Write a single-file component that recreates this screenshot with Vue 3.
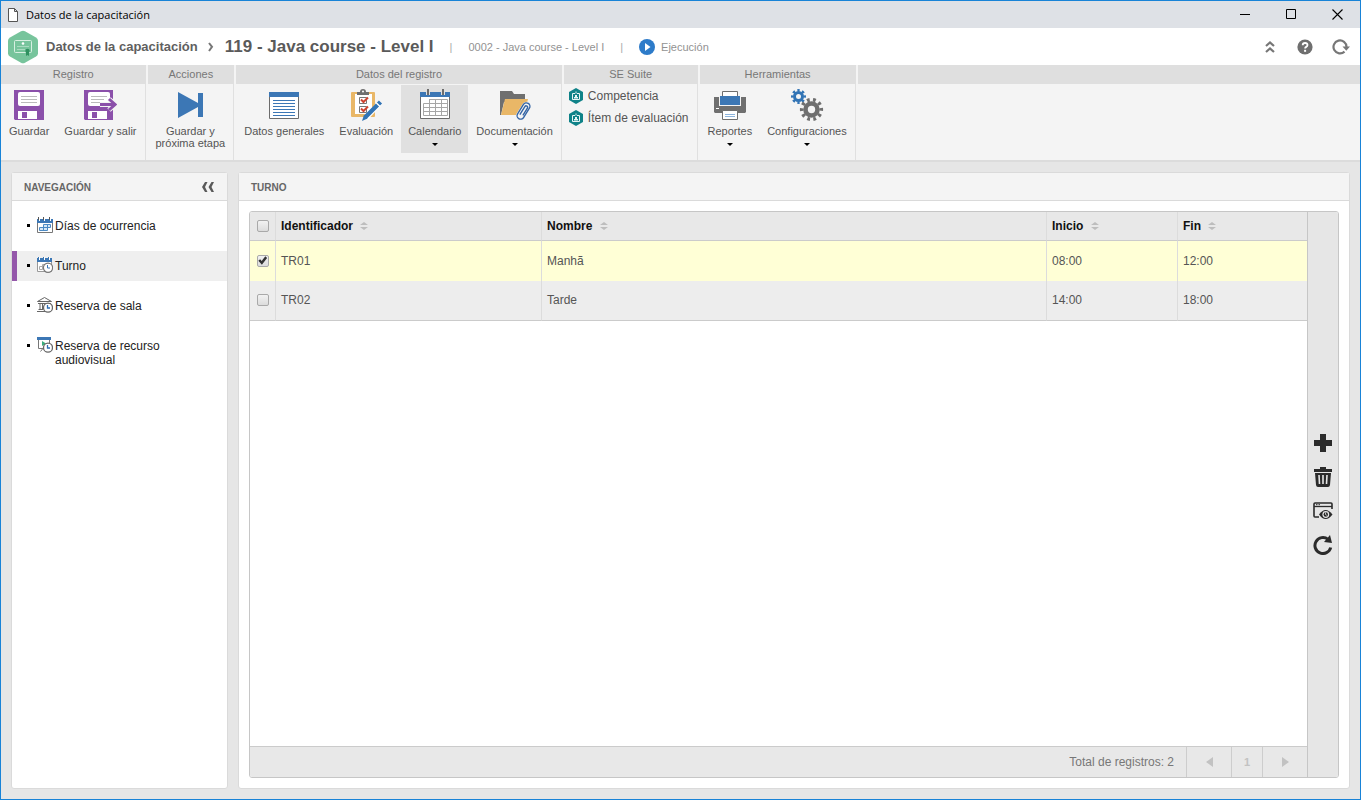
<template>
  <div class="window">
    <!-- title bar -->
    <div class="titlebar">
      <svg class="doc-icon" width="10" height="14" viewBox="0 0 10 14">
        <path d="M.5 .5h6l3 3v10h-9z M6.5 .5v3h3" fill="#fff" stroke="#555" />
      </svg>
      <span class="titlebar-text">Datos de la capacitación</span>
      <div class="window-controls">
        <button aria-label="Minimizar">
          <svg width="11" height="11" viewBox="0 0 11 11"><path d="M0 5.5h10" stroke="#000" /></svg>
        </button>
        <button aria-label="Maximizar">
          <svg width="11" height="11" viewBox="0 0 11 11"><path d="M.5 .5h9v9h-9z" fill="none" stroke="#000" /></svg>
        </button>
        <button aria-label="Cerrar">
          <svg width="11" height="11" viewBox="0 0 11 11"><path d="M.5 .5l10 10M10.5 .5l-10 10" stroke="#000" stroke-width="1.1" /></svg>
        </button>
      </div>
    </div>

    <!-- header -->
    <header class="header">
      <svg class="logo" width="30" height="34" viewBox="0 0 30 34">
        <path d="M13 1.2q2-1.1 4 0l11 6.2q2 1.2 2 3.4v12.4q0 2.2-2 3.4l-11 6.2q-2 1.1-4 0l-11-6.2q-2-1.2-2-3.4V10.8q0-2.2 2-3.4z" fill="#77c49c" />
        <rect x="6.5" y="10.5" width="17" height="12" rx="1" fill="none" stroke="#d8f0e2" />
        <circle cx="15" cy="13.500" r="1.300" fill="#fff" />
        <path d="M9 16.500h12M9 19.500h8" stroke="#a9dbc0" />
        <circle cx="19.500" cy="21" r="2.200" fill="#2f9160" />
        <path d="M18 22v4l1.500-1 1.500 1v-4z" fill="#2f9160" />
      </svg>
      <span class="crumb">Datos de la capacitación</span>
      <svg class="crumb-arrow" width="6" height="10" viewBox="0 0 6 10"><path d="M1 1l3 3.800L1 9" fill="none" stroke="#777" stroke-width="2" /></svg>
      <h1 class="course">119 - Java course - Level I</h1>
      <span class="bar">|</span>
      <span class="sub">0002 - Java course - Level I</span>
      <span class="bar">|</span>
      <svg class="play" width="16" height="16" viewBox="0 0 16 16">
        <circle cx="8" cy="8" r="8" fill="#2d7bc9" />
        <path d="M6 4l5.500 4L6 12z" fill="#fff" />
      </svg>
      <span class="sub">Ejecución</span>
      <div class="header-actions">
        <button aria-label="Contraer">
          <svg width="16" height="16" viewBox="0 0 16 16"><path d="M4 7l4-3.500L12 7M4 13l4-3.500 4 3.500" fill="none" stroke="#777" stroke-width="2.200" /></svg>
        </button>
        <button aria-label="Ayuda">
          <svg width="16" height="16" viewBox="0 0 16 16">
            <circle cx="8" cy="8" r="7.600" fill="#6f6f6f" />
            <path d="M5.700 6.300q0-2.300 2.400-2.300t2.400 2q0 1.100-1.300 1.900-1.100.6-1.100 1.700" fill="none" stroke="#fff" stroke-width="1.800" />
            <rect x="7.100" y="10.800" width="2" height="2" fill="#fff" />
          </svg>
        </button>
        <button aria-label="Actualizar">
          <svg width="18" height="16" viewBox="0 0 18 16">
            <path d="M12.500 12.600A6.500 6.500 0 1 1 14.500 8" fill="none" stroke="#777" stroke-width="2.200" />
            <path d="M10.500 7.500h7.500l-3.700 4.300z" fill="#777" />
          </svg>
        </button>
      </div>
    </header>

    <!-- ribbon -->
    <div class="ribbon">
      <section class="group">
        <h2>Registro</h2>
        <div class="group-body">
          <button class="tool">
            <svg viewBox="0 0 34 34">
              <path d="M2 2h30v30H3l-1-1z" fill="#8b50aa" />
              <rect x="6" y="4" width="22" height="14" rx="2" fill="#fff" />
              <path d="M9 8.500h16M9 11.500h16M9 14.500h16" stroke="#bbb" />
              <path d="M6 23h19v8H6z" fill="#fff" />
              <path d="M10 24h5v6h-5z" fill="#8b50aa" />
            </svg>
            <span>Guardar</span>
          </button>
          <button class="tool">
            <svg viewBox="0 0 34 34">
              <path d="M1 2h29v30H2l-1-1z" fill="#8b50aa" />
              <rect x="5" y="4" width="22" height="14" rx="2" fill="#fff" />
              <path d="M8 8.500h16M8 11.500h13M8 14.500h9" stroke="#bbb" />
              <path d="M5 23h19v8H5z" fill="#fff" />
              <path d="M9 24h5v6H9z" fill="#8b50aa" />
              <path d="M17 16.500h14M26 11l6 5.500-6 5.500" fill="none" stroke="#f4f4f4" stroke-width="5" />
              <path d="M17 16.500h14M26 11l6 5.500-6 5.500" fill="none" stroke="#8b50aa" stroke-width="3" />
            </svg>
            <span>Guardar y salir</span>
          </button>
        </div>
      </section>

      <section class="group">
        <h2>Acciones</h2>
        <div class="group-body">
          <button class="tool">
            <svg viewBox="0 0 34 34">
              <path d="M5 4l20 11V5h5v24h-5V19L5 30z" fill="#3c77b5" />
            </svg>
            <span>Guardar y<br />próxima etapa</span>
          </button>
        </div>
      </section>

      <section class="group">
        <h2>Datos del registro</h2>
        <div class="group-body">
          <button class="tool">
            <svg viewBox="0 0 34 34">
              <path d="M2.500 4.500h29v26h-29z" fill="#fff" stroke="#6c6c6c" />
              <path d="M2 4h30v5H2z" fill="#3c77b5" />
              <path d="M6 12.500h22M6 15.500h22M6 18.500h22M6 21.500h22M6 24.500h22M6 27.500h22" stroke="#3c77b5" />
            </svg>
            <span>Datos generales</span>
          </button>
          <button class="tool">
            <svg viewBox="0 0 34 34">
              <rect x="2" y="4" width="24" height="25" rx="1" fill="#e9b767" />
              <path d="M6 6h17v16l-4 4H6z" fill="#fff" />
              <path d="M8 7V4h3q0-3 3-3t3 3h3v3z" fill="#6f6f6f" />
              <circle cx="14" cy="3.500" r="1" fill="#fff" />
              <path d="M10.500 9.500h7v6h-7zM10.500 18.500h7v6h-7z" fill="#fff" stroke="#777" />
              <path d="M12 11.500l2.500 2.500 4.500-4.500M12 20.500l2.500 2.500 4.500-4.500" fill="none" stroke="#d0432f" stroke-width="2" />
              <path d="M17 30L31 15" stroke="#fff" stroke-width="5" />
              <path d="M13 33l2-6 3.500 3.500z" fill="#3274b5" />
              <path d="M16 29.500L28.500 17M29.500 16l2-2" stroke="#3274b5" stroke-width="4.400" />
            </svg>
            <span>Evaluación</span>
          </button>
          <button class="tool tool-active">
            <svg viewBox="0 0 34 34">
              <path d="M2.500 4.500h29v26h-29z" fill="#fff" stroke="#6c6c6c" />
              <path d="M2 4h30v5H2z" fill="#3c77b5" />
              <path d="M8 3h4v4H8zM23 3h4v4h-4z" fill="#e0e0e0" />
              <path d="M9 1h2v6H9zM24 1h2v6h-2z" fill="#6c6c6c" />
              <path d="M11 11.500h18.500v16h-24v-12h24M5.500 19.500h24M5.500 23.500h24M11.500 11v16.500M17.500 11v16.500M23.500 11v16.500" fill="none" stroke="#a6a6a6" />
            </svg>
            <span>Calendario</span>
            <i class="caret"></i>
          </button>
          <button class="tool">
            <svg viewBox="0 0 34 34">
              <path d="M2 3h12l2 3h11v8H6L3 27H2z" fill="#6f6f6f" />
              <path d="M7 11h23l-4 16H3z" fill="#e9b767" />
              <g fill="none" stroke-width="1.400" transform="rotate(32 25.500 23)">
                <rect x="21" y="13" width="9" height="20" rx="4.500" fill="#f4f4f4" />
                <rect x="22" y="14" width="7" height="18" rx="3.500" stroke="#3565a5" />
                <path d="M24.300 28v-9.500a1.500 1.500 0 0 1 3 0V27" stroke="#3565a5" />
              </g>
            </svg>
            <span>Documentación</span>
            <i class="caret"></i>
          </button>
        </div>
      </section>

      <section class="group">
        <h2>SE Suite</h2>
        <div class="group-body group-links">
          <button v-for="item in suiteItems" :key="item" class="suite">
            <svg width="14" height="16" viewBox="0 0 14 16">
              <path d="M7 0l7 4v8l-7 4-7-4V4z" fill="#0f8288" />
              <path d="M6 5.500H3.500v6h7v-6H8" fill="none" stroke="#e6f4f4" />
              <path d="M6.500 3.500h1v2h-1z" fill="#e6f4f4" />
              <path d="M5 10.500h4V9H8V7H6v2H5z" fill="#e6f4f4" />
            </svg>
            <span>{{ item }}</span>
          </button>
        </div>
      </section>

      <section class="group">
        <h2>Herramientas</h2>
        <div class="group-body">
          <button class="tool">
            <svg viewBox="0 0 34 34">
              <path d="M9.500 3.500h15v8h-15z" fill="#fff" stroke="#6f6f6f" />
              <path d="M1 9h32v15l-1 1H2l-1-1z" fill="#6f6f6f" />
              <path d="M6 8h22v10H6z" fill="#f4f4f4" />
              <path d="M7 8h20v9H7z" fill="#3c77b5" />
              <path d="M3 20.500h3" stroke="#fff" />
              <path d="M9.500 22.500h15v9h-15z" fill="#fff" stroke="#6f6f6f" />
              <path d="M12 26.500h10M12 28.500h10" stroke="#8db4dc" />
            </svg>
            <span>Reportes</span>
            <i class="caret"></i>
          </button>
          <button class="tool">
            <svg viewBox="0 0 34 34">
              <g fill="none" stroke="#3274b5">
                <circle cx="8.500" cy="8.500" r="4" stroke-width="3" />
                <circle cx="8.500" cy="8.500" r="6.200" stroke-width="2.600" pathLength="16" stroke-dasharray="1 1" stroke-dashoffset=".5" />
              </g>
              <g fill="none" stroke="#6f6f6f">
                <circle cx="21.500" cy="21.500" r="6" stroke-width="4.600" />
                <circle cx="21.500" cy="21.500" r="9.800" stroke-width="3.600" pathLength="20" stroke-dasharray=".9 1.100" stroke-dashoffset=".5" />
              </g>
            </svg>
            <span>Configuraciones</span>
            <i class="caret"></i>
          </button>
        </div>
      </section>

      <div class="ribbon-rest"></div>
    </div>

    <!-- content -->
    <main class="content">
      <nav class="panel nav">
        <div class="panel-head">
          <h3>NAVEGACIÓN</h3>
          <button aria-label="Ocultar navegación">
            <svg width="14" height="12" viewBox="0 0 14 12"><path d="M6.500 1H4L1 6l3 5h2.500L4 6zM13 1h-2.500l-3 5 3 5H13l-2.500-5z" fill="#5a5a5a" /></svg>
          </button>
        </div>
        <ul>
          <li v-for="item in navItems" :key="item.icon">
            <a href="#" :class="{ active: item.icon === current }" @click.prevent="current = item.icon">
              <i class="bullet"></i>
              <svg v-if="item.icon === 'days'" width="16" height="16" viewBox="0 0 16 16">
                <path d="M.5 3.500h15v12H.5z" fill="#fff" stroke="#777" />
                <path d="M0 2h16v4H0z" fill="#3c77b5" />
                <path d="M2.500 0v4M7.500 0v4M13.500 0v4" stroke="#fff" />
                <path d="M1.500 0v3M6.500 0v3M12.500 0v3" stroke="#555" />
                <path d="M6.500 7.500h7v3h-7zM2.500 10.500h8v3h-8zM10.500 7.500v3M6.500 10.500v3" fill="#d7e8f7" stroke="#4c8ac4" />
              </svg>
              <svg v-else-if="item.icon === 'shift'" width="16" height="16" viewBox="0 0 16 16">
                <path d="M.5 3.500h14v11H.5z" fill="#fff" stroke="#999" />
                <path d="M0 1h15v4H0z" fill="#3c77b5" />
                <path d="M2.500 0v3M7.500 0v3M12.500 0v3" stroke="#fff" />
                <path d="M1.500 0v3M6.500 0v3M11.500 0v3" stroke="#3c77b5" />
                <path d="M2.500 9.500h3v3h-3zM5.500 7.500h3v3h-3z" fill="none" stroke="#aaa" />
                <circle cx="11" cy="10.700" r="4.600" fill="#fff" stroke="#777" stroke-width="1.200" />
                <path d="M10.500 8v3H13" fill="none" stroke="#3c77b5" />
              </svg>
              <svg v-else-if="item.icon === 'room'" width="16" height="16" viewBox="0 0 16 16">
                <path d="M.5 4.500L7.500 .5l7 4zM1 6.500h13M0 14.500h8M3 7v5M5.500 7v5M1.500 12.500H6" fill="none" stroke="#666" />
                <circle cx="11" cy="10.700" r="4.500" fill="#fff" stroke="#666" stroke-width="1.300" />
                <path d="M10.500 8v3H13" fill="none" stroke="#2f6db3" stroke-width="1.300" />
              </svg>
              <svg v-else width="16" height="16" viewBox="0 0 16 16">
                <path d="M1.500 2v9.500H7M12.500 2v4M5.500 12L3.500 14.500" fill="none" stroke="#777" />
                <path d="M0 0h14v3H0z" fill="#3c77b5" />
                <path d="M5 4l4 2.500L5 9z" fill="#37ad7c" />
                <circle cx="11" cy="10.700" r="4.500" fill="#fff" stroke="#666" stroke-width="1.300" />
                <path d="M10.500 8v3H13" fill="none" stroke="#2f6db3" stroke-width="1.300" />
              </svg>
              <span>{{ item.label }}</span>
            </a>
          </li>
        </ul>
      </nav>

      <section class="panel main">
        <div class="panel-head">
          <h3>TURNO</h3>
        </div>
        <div class="grid">
          <div class="grid-main">
            <table>
              <thead>
                <tr>
                  <th class="col-check">
                    <input type="checkbox" v-model="allSelected" aria-label="Seleccionar todos" />
                  </th>
                  <th v-for="col in columns" :key="col.key" :class="'col-' + col.key">
                    {{ col.label }}
                    <svg class="sort" width="8" height="8" viewBox="0 0 8 8"><path d="M4 0l4 3H0zM0 5h8L4 8z" fill="#bdbdbd" /></svg>
                  </th>
                </tr>
              </thead>
              <tbody>
                <tr v-for="row in rows" :key="row.id" :class="{ selected: row.checked }">
                  <td class="col-check">
                    <input type="checkbox" v-model="row.checked" :aria-label="row.id" />
                  </td>
                  <td>{{ row.id }}</td>
                  <td>{{ row.name }}</td>
                  <td>{{ row.start }}</td>
                  <td>{{ row.end }}</td>
                </tr>
              </tbody>
            </table>
            <div class="grid-footer">
              <span class="total">Total de registros: {{ rows.length }}</span>
              <button class="page-prev" aria-label="Página anterior">
                <svg width="7" height="10" viewBox="0 0 7 10"><path d="M7 0v10L0 5z" fill="#c2c2c2" /></svg>
              </button>
              <button class="page-number">1</button>
              <button class="page-next" aria-label="Página siguiente">
                <svg width="7" height="10" viewBox="0 0 7 10"><path d="M0 0v10l7-5z" fill="#c2c2c2" /></svg>
              </button>
            </div>
          </div>
          <div class="grid-tools">
            <button aria-label="Agregar">
              <svg width="20" height="20" viewBox="0 0 20 20"><path d="M7 1h6v6h6v6h-6v6H7v-6H1V7h6z" fill="#2b2b2b" /></svg>
            </button>
            <button aria-label="Eliminar">
              <svg width="20" height="20" viewBox="0 0 20 20">
                <path d="M7 0h6v2h6v3H1V2h6zM2 6h16l-1 12q-.3 2-2 2H5q-1.700 0-2-2z" fill="#2b2b2b" />
                <path d="M6 8l.5 9M10 8v9M14 8l-.5 9" stroke="#e6e6e6" stroke-width="1.600" />
              </svg>
            </button>
            <button aria-label="Visualizar">
              <svg width="20" height="20" viewBox="0 0 20 20">
                <path d="M6 16H2q-1 0-1-1V3q0-1 1-1h16q1 0 1 1v5" fill="none" stroke="#2b2b2b" stroke-width="1.600" />
                <path d="M1 5.500h18" stroke="#2b2b2b" stroke-width="1.300" />
                <path d="M3 3.700h1.500M5.500 3.700H7" stroke="#2b2b2b" />
                <path d="M6 13.500q6.500-9 13.500 0-7 9-13.500 0z" fill="#2b2b2b" />
                <circle cx="12.800" cy="13.500" r="3.400" fill="#e6e6e6" />
                <circle cx="12.800" cy="13.500" r="2.200" fill="#2b2b2b" />
                <path d="M12.500 11.500v2l1.300.8" fill="none" stroke="#e6e6e6" stroke-width=".8" />
              </svg>
            </button>
            <button aria-label="Actualizar lista">
              <svg width="20" height="20" viewBox="0 0 20 20">
                <path d="M17.700 12.500A8 8 0 1 1 15 4.300" fill="none" stroke="#2b2b2b" stroke-width="3" />
                <path d="M17 0l2 8-8-1z" fill="#2b2b2b" />
              </svg>
            </button>
          </div>
        </div>
      </section>
    </main>
  </div>
</template>

<script setup>
import { ref, computed } from "vue";

const current = ref("shift");

const suiteItems = ["Competencia", "Ítem de evaluación"];

const navItems = [
  { icon: "days", label: "Días de ocurrencia" },
  { icon: "shift", label: "Turno" },
  { icon: "room", label: "Reserva de sala" },
  { icon: "media", label: "Reserva de recurso audiovisual" },
];

const columns = [
  { key: "id", label: "Identificador" },
  { key: "name", label: "Nombre" },
  { key: "start", label: "Inicio" },
  { key: "end", label: "Fin" },
];

const rows = ref([
  { id: "TR01", name: "Manhã", start: "08:00", end: "12:00", checked: true },
  { id: "TR02", name: "Tarde", start: "14:00", end: "18:00", checked: false },
]);

// select / clear every row
const allSelected = computed({
  get: () => rows.value.every((row) => row.checked),
  set: (value) => rows.value.forEach((row) => (row.checked = value)),
});
</script>

<style>
body {
  margin: 0;
}
</style>

<style scoped>
.window {
  display: flex;
  flex-direction: column;
  min-height: 100vh;
  box-sizing: border-box;
  border: 1px solid #1883d7;
  background: #e6e6e6;
  font-family: "Liberation Sans", Arial, sans-serif;
  font-size: 12px;
  color: #555;
}

button {
  padding: 0;
  border: 0;
  background: none;
  font: inherit;
  color: inherit;
}

svg {
  display: block;
  flex: none;
}

h1,
h2,
h3 {
  margin: 0;
}

/* title bar */
.titlebar {
  display: flex;
  align-items: center;
  height: 27px;
  padding-left: 7px;
  background: #dee1e6;
}

.titlebar-text {
  margin-left: 8px;
  font-family: "Open Sans", "Noto Sans", sans-serif;
  font-size: 11px;
  color: #000;
}

.window-controls {
  display: flex;
  margin-left: auto;
}

.window-controls button {
  display: flex;
  align-items: center;
  justify-content: center;
  width: 46px;
  height: 27px;
}

/* header */
.header {
  display: flex;
  align-items: center;
  height: 37px;
  padding: 0 10px 0 7px;
  background: #fff;
  white-space: nowrap;
}

.crumb {
  margin-left: 8px;
  font-size: 13px;
  font-weight: bold;
  color: #5f5f5f;
}

.crumb-arrow {
  margin: 0 11px 0 10px;
}

.course {
  font-size: 17px;
  color: #5a5a5a;
}

.bar {
  margin: 0 16px;
  font-size: 11px;
  color: #aaa;
}

.sub {
  font-size: 11px;
  color: #929292;
}

.play {
  margin-right: 6px;
}

.header-actions {
  display: flex;
  gap: 19px;
  margin-left: auto;
}

/* ribbon */
.ribbon {
  display: flex;
  gap: 2px;
  height: 95px;
  border-bottom: 2px solid #dcdcdc;
  background: #f4f4f4;
}

.group {
  display: flex;
  flex-direction: column;
}

.group h2,
.ribbon-rest::before {
  height: 19px;
  background: #dfdfdf;
  font-size: 11px;
  font-weight: normal;
  line-height: 19px;
  text-align: center;
  color: #777;
}

.group-body {
  display: flex;
  flex: 1;
  align-items: flex-start;
  gap: 1px;
  padding: 1px 1px 0;
  border-right: 1px solid #e0e0e0;
}

.ribbon-rest {
  flex: 1;
}

.ribbon-rest::before {
  content: "";
  display: block;
}

.tool {
  display: flex;
  flex-direction: column;
  align-items: center;
  height: 68px;
  padding: 3px 7px 0;
  font-size: 11px;
  line-height: 12px;
  white-space: nowrap;
}

.tool svg {
  width: 34px;
  height: 34px;
  margin-bottom: 3px;
}

.tool-active {
  background: #e0e0e0;
}

.caret {
  margin-top: 6px;
  border: 3px solid transparent;
  border-top-color: #000;
  border-bottom: 0;
}

.group-links {
  flex-direction: column;
  gap: 0;
  padding: 1px 8px 0 5px;
}

.suite {
  display: flex;
  align-items: center;
  gap: 5px;
  height: 22px;
  font-size: 12px;
}

/* panels */
.content {
  display: flex;
  flex: 1;
  gap: 10px;
  padding: 10px;
}

.panel {
  display: flex;
  flex-direction: column;
  border: 1px solid #dadada;
  border-radius: 3px;
  background: #fff;
}

.nav {
  flex: none;
  width: 215px;
}

.main {
  flex: 1;
}

.panel-head {
  display: flex;
  align-items: center;
  justify-content: space-between;
  height: 27px;
  padding: 0 12px;
  border-bottom: 1px solid #dadada;
  background: #f4f4f4;
}

.panel-head h3 {
  padding-top: 2px;
  font-size: 10px;
  color: #666;
}

.nav ul {
  display: flex;
  flex-direction: column;
  gap: 10px;
  margin: 10px 0 0;
  padding: 0;
  list-style: none;
}

.nav a {
  display: flex;
  align-items: flex-start;
  padding: 8px 40px 8px 10px;
  border-left: 5px solid transparent;
  line-height: 14px;
  color: #222;
  text-decoration: none;
}

.nav a.active {
  border-left-color: #9457aa;
  background: #efefef;
}

.nav a svg {
  margin: -2px 2px 0 7px;
}

.bullet {
  flex: none;
  width: 3px;
  height: 3px;
  margin-top: 5px;
  background: #000;
}

/* data grid */
.grid {
  display: flex;
  flex: 1;
  margin: 10px;
  border: 1px solid #c6c6c6;
  border-radius: 3px;
  overflow: hidden;
}

.grid-main {
  display: flex;
  flex: 1;
  flex-direction: column;
}

table {
  width: 100%;
  border-collapse: separate;
  border-spacing: 0;
  table-layout: fixed;
}

th,
td {
  padding: 0 5px;
  border-right: 1px solid #dcdcdc;
  text-align: left;
}

th:last-child,
td:last-child {
  border-right: 0;
}

th {
  height: 28px;
  border-bottom: 1px solid #cbcbcb;
  background: #e8e8e8;
  color: #111;
}

td {
  height: 39px;
  padding-bottom: 1px;
  background: #ededed;
}

tbody tr:last-child td {
  height: 37px;
  padding-bottom: 2px;
  border-bottom: 1px solid #cbcbcb;
}

tr.selected td {
  background: #ffffd6;
}

.col-check {
  width: 25px;
  padding-right: 0;
  padding-left: 0;
}

.col-id {
  width: 255px;
}

.col-start {
  width: 120px;
}

.col-end {
  width: 119px;
}

.sort {
  display: inline-block;
  margin-left: 4px;
}

input[type="checkbox"] {
  appearance: none;
  display: block;
  width: 12px;
  height: 12px;
  box-sizing: border-box;
  margin: 0 auto;
  border: 1px solid #a9a9a9;
  border-radius: 2px;
  background: linear-gradient(#f2f2f2, #dcdcdc);
}

input[type="checkbox"]:checked::before {
  content: "";
  display: block;
  height: 10px;
  background: #333;
  clip-path: polygon(8% 52%, 26% 38%, 42% 54%, 78% 8%, 96% 24%, 44% 92%);
}

.grid-footer {
  display: flex;
  align-items: stretch;
  justify-content: flex-end;
  height: 30px;
  margin-top: auto;
  border-top: 1px solid #cbcbcb;
  background: #e8e8e8;
  color: #777;
}

.total {
  padding-right: 12px;
  line-height: 30px;
}

.grid-footer button {
  display: flex;
  align-items: center;
  justify-content: center;
  width: 45px;
  border-left: 1px solid #cdcdcd;
}

.grid-footer .page-number {
  width: 31px;
  font-size: 11px;
  font-weight: bold;
  color: #c2c2c2;
}

.grid-tools {
  display: flex;
  flex-direction: column;
  align-items: center;
  justify-content: center;
  gap: 14px;
  width: 30px;
  padding-bottom: 2px;
  border-left: 1px solid #c6c6c6;
  background: #e6e6e6;
}
</style>
